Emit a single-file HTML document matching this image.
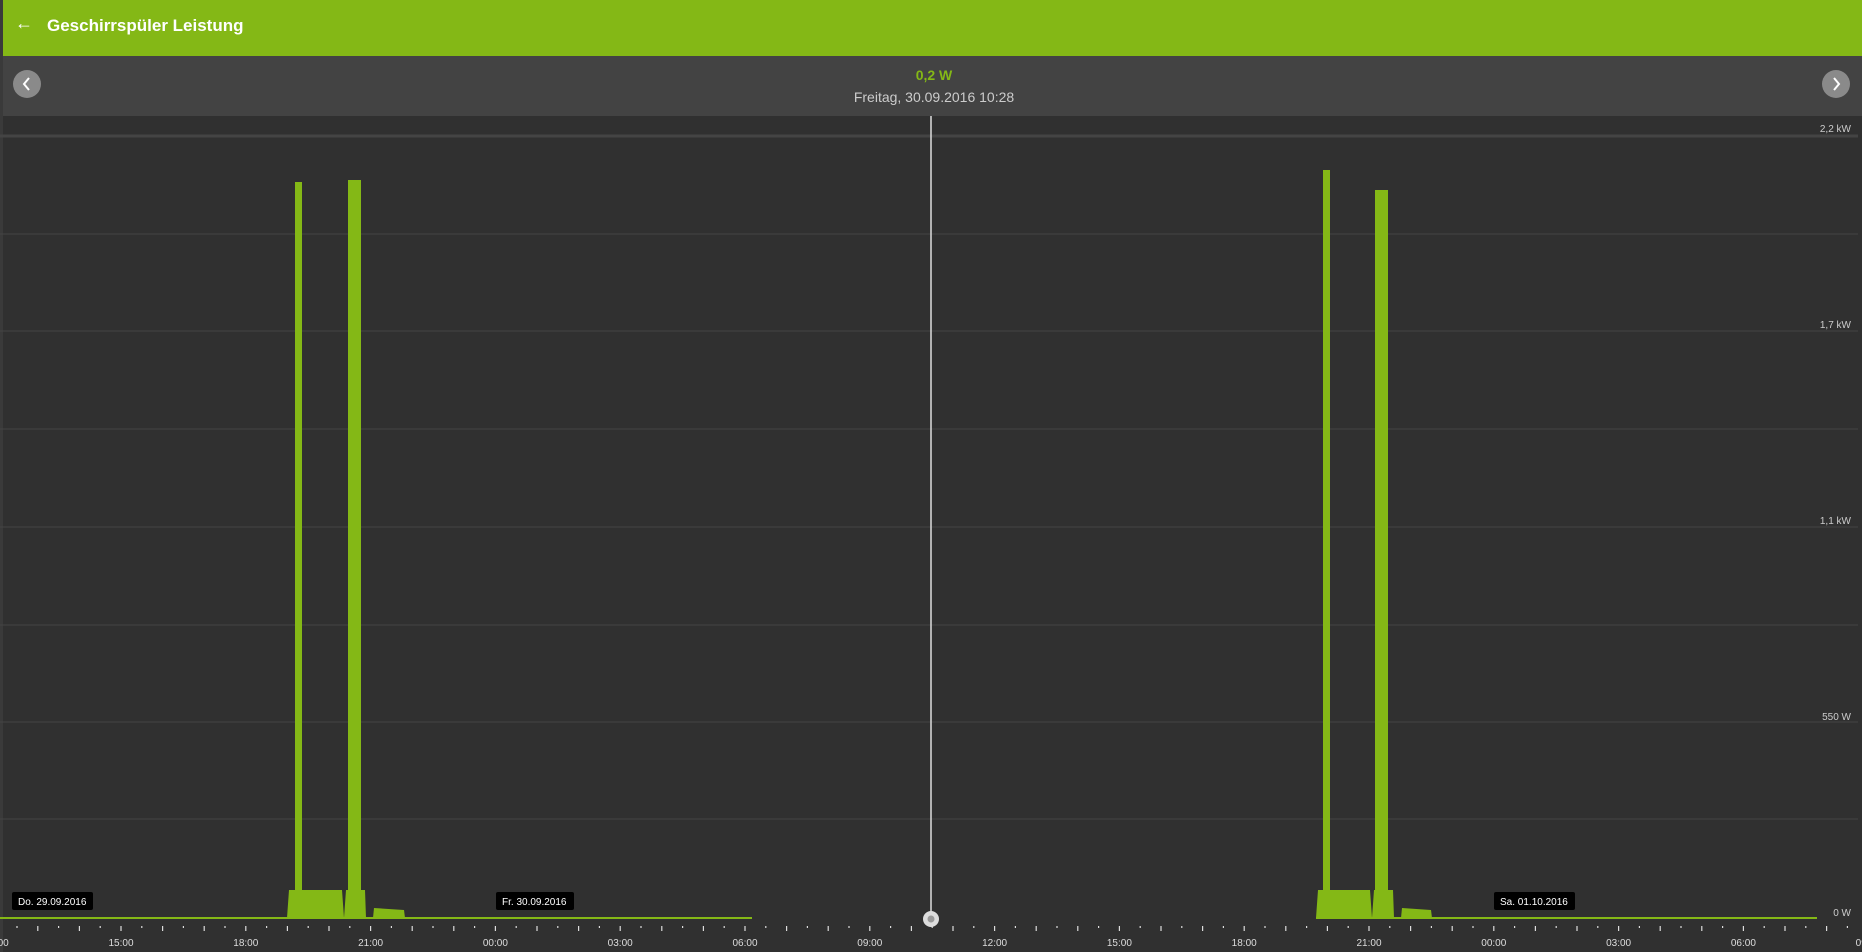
<!DOCTYPE html>
<html><head><meta charset="utf-8"><style>
html,body{margin:0;padding:0;width:1862px;height:952px;overflow:hidden;background:#303030;font-family:"Liberation Sans",Arial,sans-serif}
.hdr{position:absolute;left:0;top:0;width:1862px;height:56px;background:#84b816;border-left:3px solid #3a3a3a;box-sizing:border-box}
.hdr .t{position:absolute;left:44px;top:16px;color:#fff;font-size:17px;font-weight:bold}
.hdr .a{position:absolute;left:12px;top:13px;color:#fff;font-size:18px;font-weight:bold}
.sub{position:absolute;left:0;top:56px;width:1862px;height:60px;background:#434343;border-left:3px solid #3a3a3a;box-sizing:border-box}
.btn{position:absolute;top:14px;width:28px;height:28px;border-radius:50%;background:#8a8a8a}
.v{position:absolute;left:0;width:1862px;text-align:center;top:11px;color:#84b816;font-weight:bold;font-size:14px}
.d{position:absolute;left:0;width:1862px;text-align:center;top:33px;color:#ccc;font-size:14px}
svg{position:absolute;left:0;top:0}
</style></head><body>
<div class="hdr"><span class="a">&#8592;</span><span class="t">Geschirrspüler Leistung</span></div>
<div class="sub">
<div class="btn" style="left:10px"><svg width="28" height="28"><path d="M16 8 L11 14 L16 20" stroke="#fff" stroke-width="2" fill="none"/></svg></div>
<div class="btn" style="left:1819px"><svg width="28" height="28"><path d="M12 8 L17 14 L12 20" stroke="#fff" stroke-width="2" fill="none"/></svg></div>
<div class="v">0,2 W</div><div class="d">Freitag, 30.09.2016 10:28</div>
</div>
<svg width="1862" height="952" style="top:0" id="c">
<rect x="0" y="116" width="3" height="836" fill="#3a3a3a"/>
<line x1="0" y1="136" x2="1858" y2="136" stroke="#444" stroke-width="3"/>
<g stroke="#444" stroke-width="1">
<line x1="0" y1="234" x2="1858" y2="234"/><line x1="0" y1="331" x2="1858" y2="331"/>
<line x1="0" y1="429" x2="1858" y2="429"/><line x1="0" y1="527" x2="1858" y2="527"/>
<line x1="0" y1="625" x2="1858" y2="625"/><line x1="0" y1="722" x2="1858" y2="722"/>
<line x1="0" y1="819" x2="1858" y2="819"/></g>
<g fill="#ccc" font-size="10" font-family="Liberation Sans,sans-serif" text-anchor="end">
<text x="1851" y="132">2,2  kW</text><text x="1851" y="328">1,7  kW</text>
<text x="1851" y="524">1,1  kW</text><text x="1851" y="720">550  W</text><text x="1851" y="916">0  W</text></g>
<g fill="#84b816">
<rect x="0" y="917" width="752" height="2"/><rect x="1316" y="917" width="501" height="2"/>
<path d="M287 918 L289 890 L342 890 L344 918 Z M344 918 L346 890 L365 890 L366 918 Z"/>
<rect x="295" y="182" width="7" height="736"/><rect x="348" y="180" width="13" height="738"/>
<path d="M373 918 L374 908 L404 910 L405 918 Z"/>
<path d="M1316 918 L1318 890 L1370 890 L1372 918 Z M1372 918 L1374 890 L1393 890 L1394 918 Z"/>
<rect x="1323" y="170" width="7" height="748"/><rect x="1375" y="190" width="13" height="728"/>
<path d="M1401 918 L1402 908 L1431 910 L1432 918 Z"/>
</g>
<line x1="931" y1="116" x2="931" y2="918" stroke="#ddd" stroke-width="1.5"/>
<circle cx="931" cy="919" r="8" fill="#ddd"/><circle cx="931" cy="919" r="3.5" fill="#999"/>
<g font-size="10" font-family="Liberation Sans,sans-serif" fill="#fff">
<rect x="12" y="892" width="81" height="18" rx="2" fill="#000"/><text x="18" y="905">Do. 29.09.2016</text>
<rect x="496" y="892" width="78" height="18" rx="2" fill="#000"/><text x="502" y="905">Fr. 30.09.2016</text>
<rect x="1494" y="892" width="81" height="18" rx="2" fill="#000"/><text x="1500" y="905">Sa. 01.10.2016</text>
</g>
<g id="ticks" stroke="#ddd" stroke-width="1.2"></g>
<g id="lbl" fill="#ddd" font-size="10" font-family="Liberation Sans,sans-serif" text-anchor="middle"></g>
</svg>
<script>
var t=document.getElementById('ticks'),l=document.getElementById('lbl'),ns='http://www.w3.org/2000/svg';
var hrs=['12:00','15:00','18:00','21:00','00:00','03:00','06:00','09:00','12:00','15:00','18:00','21:00','00:00','03:00','06:00','09:00'];
for(var k=-12;k<90;k++){var x=121+k*20.8;if(x<2||x>1858)continue;var ln=document.createElementNS(ns,'line');
ln.setAttribute('x1',x);ln.setAttribute('x2',x);ln.setAttribute('y1',k%2==0?926:926);ln.setAttribute('y2',k%2==0?931:928);t.appendChild(ln);}
for(var i=0;i<16;i++){var x=121+(i-1)*124.8;var tx=document.createElementNS(ns,'text');tx.setAttribute('x',x);tx.setAttribute('y',946);tx.textContent=hrs[i];l.appendChild(tx);}
</script>
</body></html>
